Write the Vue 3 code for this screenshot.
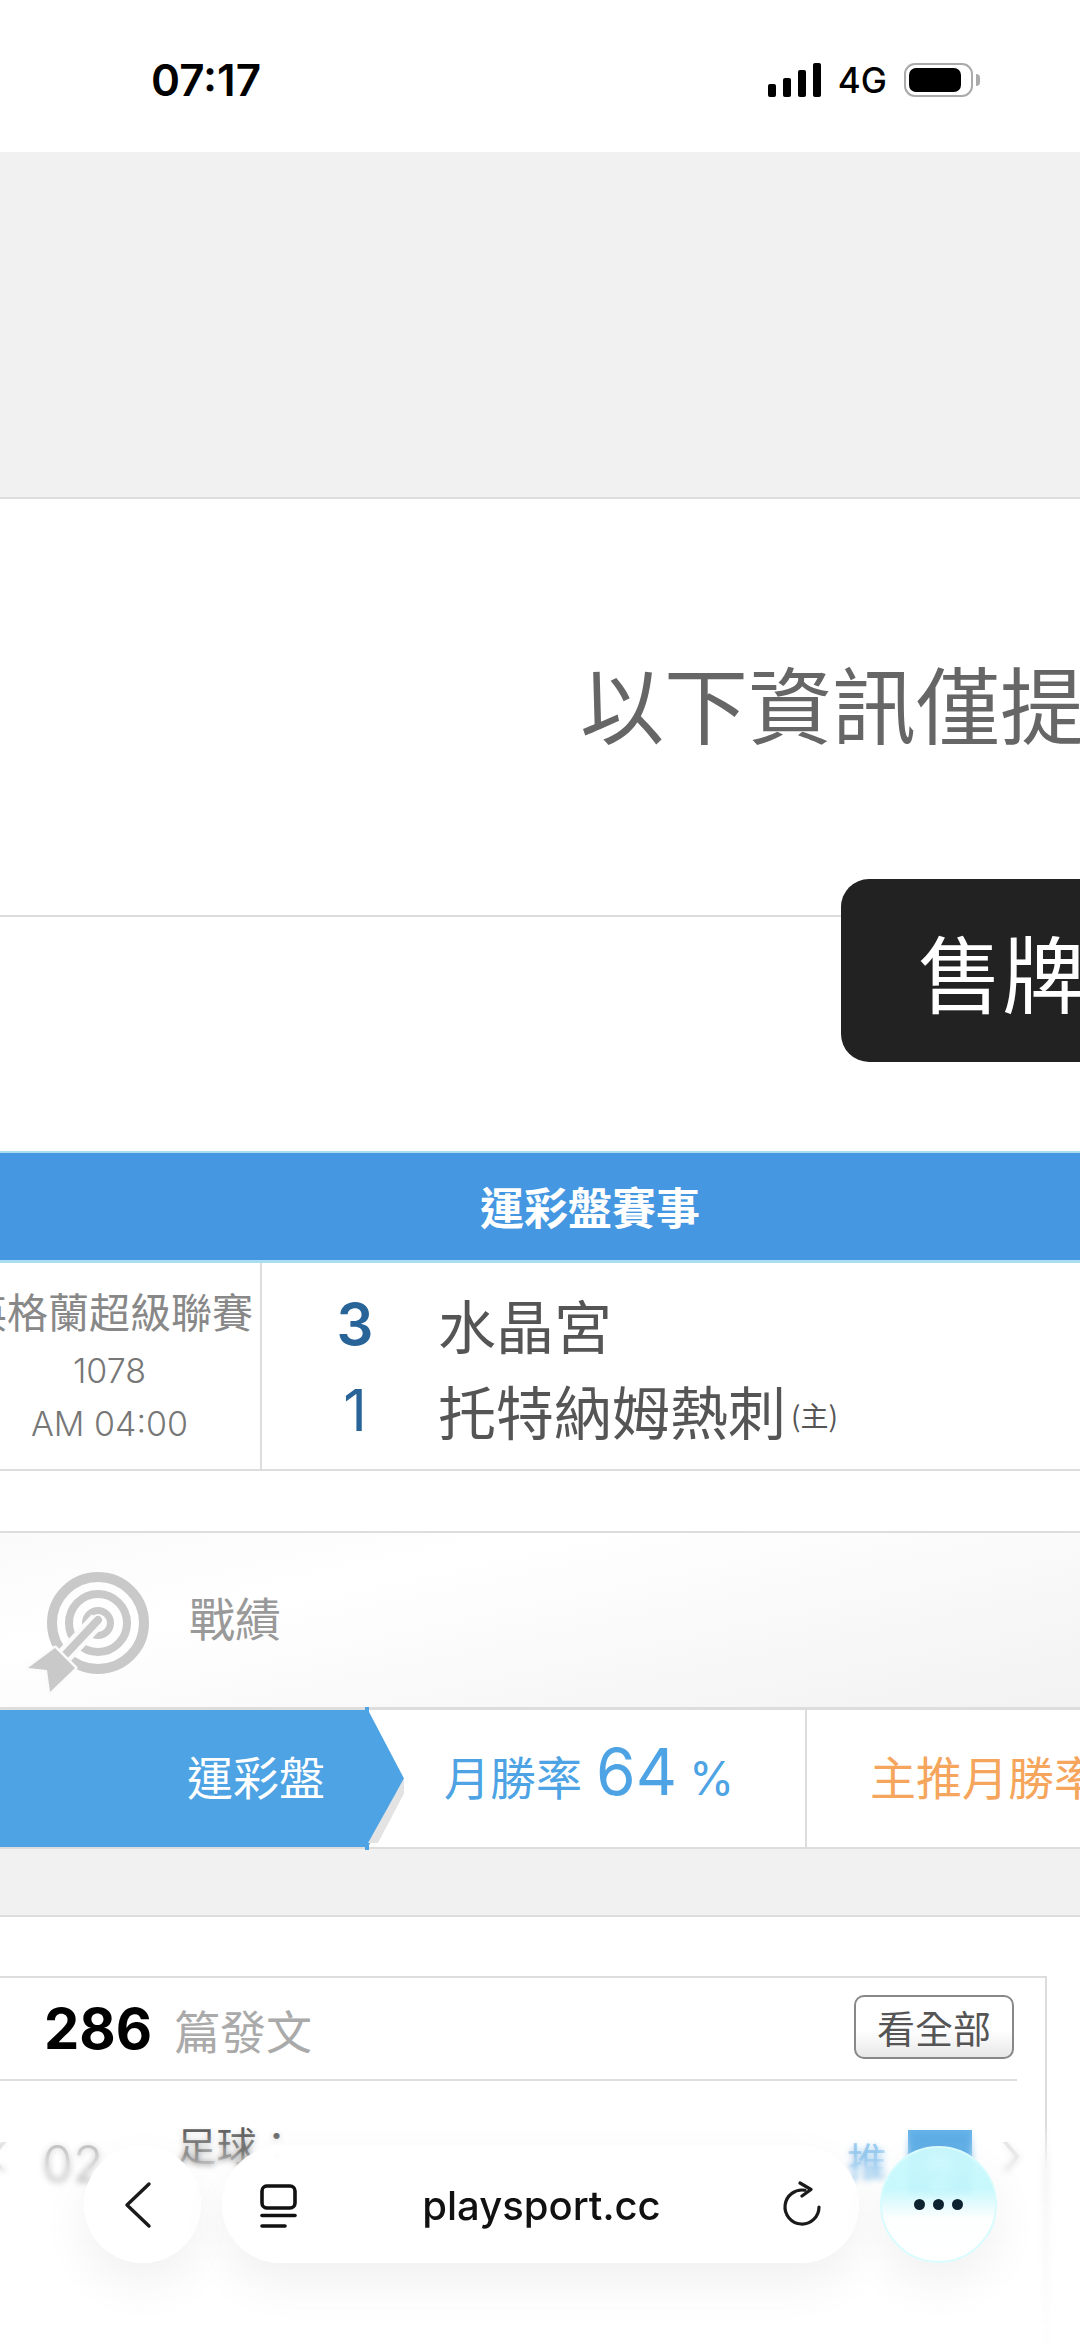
<script setup>
const signalBars = [13, 19, 27, 34]
const teams = [
  { score: 3, name: '水晶宮', strong: true },
  { score: 1, name: '托特納姆熱刺', home: true }
]
</script>

<template>
  <div class="page">
    <header class="status">
      <span class="time">07:17</span>
      <div class="status-right">
        <div class="signal">
          <i v-for="h in signalBars" :key="h" :style="{ height: h + 'px' }"></i>
        </div>
        <span class="net">4G</span>
        <div class="battery"><i></i></div>
        <div class="battery-cap"></div>
      </div>
    </header>

    <div class="gray-top"></div>

    <section class="notice">以下資訊僅提供參考</section>

    <section class="sale">
      <div class="sale-btn">售牌</div>
    </section>

    <div class="match-title">運彩盤賽事</div>
    <div class="match">
      <div class="league">
        <div class="league-name">英格蘭超級聯賽</div>
        <div class="league-meta">1078</div>
        <div class="league-meta">AM 04:00</div>
      </div>
      <div class="teams">
        <div v-for="t in teams" :key="t.name" class="team">
          <span class="score" :class="{ strong: t.strong }">{{ t.score }}</span>
          <span class="team-name">{{ t.name }}</span>
          <span v-if="t.home" class="home">(主)</span>
        </div>
      </div>
    </div>

    <div class="gap-white"></div>

    <section class="record-head">
      <svg class="target" width="135" height="130" viewBox="0 0 135 130">
        <g fill="none" stroke="#c9c9c9">
          <circle cx="78" cy="53" r="46" stroke-width="10" />
          <circle cx="78" cy="53" r="29" stroke-width="8" />
          <circle cx="78" cy="53" r="12.5" stroke-width="7" />
        </g>
        <path d="M78 50L45 85" stroke="#fbfbfb" stroke-width="17" fill="none" />
        <path d="M78 50L45 85" stroke="#c9c9c9" stroke-width="8" stroke-linecap="round" fill="none" />
        <path d="M35 78L8 98L27 100L30 122L55 98Z" fill="#c9c9c9" stroke="#fbfbfb" stroke-width="5" stroke-linejoin="round" paint-order="stroke" />
      </svg>
      <span class="record-title">戰績</span>
    </section>

    <section class="tabs">
      <div class="tab-active">
        <i class="tab-nub"></i>
        <span>運彩盤</span>
      </div>
      <div class="tab-rate">
        <span>月勝率</span><b>64</b><em>%</em>
      </div>
      <div class="tab-main">主推月勝率</div>
    </section>

    <div class="gray-gap"></div>

    <div class="panel-wrap">
      <section class="panel">
        <div class="panel-head">
          <b class="count">286</b>
          <span class="count-label">篇發文</span>
          <button class="see-all">看全部</button>
        </div>
        <div class="post">
          <span class="post-prev">‹</span>
          <span class="post-date">02</span>
          <span class="post-title">足球：</span>
          <span class="post-tag">推</span>
          <span class="post-badge">2</span>
          <span class="post-next">›</span>
        </div>
      </section>
    </div>

    <!-- browser toolbar floats over the page -->
    <div class="frost"></div>
    <nav class="toolbar">
      <div class="round-btn back">
        <svg width="30" height="48" viewBox="0 0 30 48" fill="none" stroke="#1a1a1a" stroke-width="3.4" stroke-linecap="round" stroke-linejoin="round">
          <path d="M26 3L4 24L26 45" />
        </svg>
      </div>
      <div class="url-pill">
        <svg width="40" height="46" viewBox="0 0 40 46" fill="none" stroke="#111" stroke-width="3.6" stroke-linecap="round" stroke-linejoin="round">
          <rect x="4" y="4" width="33" height="22" rx="5" />
          <path d="M4 33.5H37" />
          <path d="M4 44H27" />
        </svg>
        <span class="url">playsport.cc</span>
        <svg width="42" height="48" viewBox="0 0 42 48" fill="none" stroke="#1a1a1a" stroke-width="3.2" stroke-linecap="round" stroke-linejoin="round">
          <path d="M38 26A17 17 0 1 1 24 9.3" />
          <path d="M19 2L30 8.5L21 15" />
        </svg>
      </div>
      <div class="round-btn bubble">
        <i></i><i></i><i></i>
      </div>
    </nav>
  </div>
</template>

<style>
html, body {
  margin: 0;
  background: #fff;
}
</style>

<style scoped>
.page {
  position: relative;
  width: 1080px;
  height: 2347px;
  overflow: hidden;
  background: #fff;
  font-family: "Noto Sans CJK TC", "Noto Sans", sans-serif;
}

.status {
  height: 152px;
  box-sizing: border-box;
  padding: 8px 100px 0 151px;
  display: flex;
  justify-content: space-between;
  align-items: center;
  background: #fff;
}
.time {
  font: 600 44px/1 Inter, sans-serif;
  color: #000;
}
.status-right {
  display: flex;
  align-items: center;
}
.signal {
  display: flex;
  align-items: flex-end;
  gap: 7px;
  height: 34px;
}
.signal i {
  width: 8px;
  background: #000;
  border-radius: 2px;
}
.net {
  margin-left: 17px;
  font: 500 35px/1 Inter, sans-serif;
  color: #000;
}
.battery {
  margin-left: 17px;
  width: 69px;
  height: 34px;
  box-sizing: border-box;
  border: 2.5px solid #aaa;
  border-radius: 11px;
  padding: 2.5px;
}
.battery i {
  display: block;
  width: 52px;
  height: 24px;
  background: #000;
  border-radius: 7px;
}
.battery-cap {
  margin-left: 3px;
  width: 4px;
  height: 12px;
  background: #aaa;
  border-radius: 0 4px 4px 0;
}

.gray-top {
  height: 345px;
  background: #f1f1f1;
  border-bottom: 2px solid #ddd;
}

.notice {
  height: 418px;
  box-sizing: border-box;
  padding: 141px 0 0 580px;
  border-bottom: 2px solid #ddd;
  font-size: 84px;
  line-height: 124px;
  color: #666;
  white-space: nowrap;
}

.sale {
  height: 272px;
  margin-top: -38px;
  padding-left: 841px;
  box-sizing: border-box;
}
.sale-btn {
  width: 300px;
  height: 183px;
  box-sizing: border-box;
  padding-left: 77px;
  background: #222;
  border-radius: 28px;
  color: #fff;
  font-size: 84px;
  line-height: 183px;
  white-space: nowrap;
}

.match-title {
  height: 107px;
  padding-left: 480px;
  background: #4497e0;
  border-top: 2px solid #a9def0;
  border-bottom: 3px solid #a9def0;
  color: #fff;
  font-size: 44px;
  font-weight: 700;
  line-height: 107px;
}

.match {
  display: flex;
  height: 206px;
  border-bottom: 2px solid #ddd;
}
.league {
  flex: none;
  width: 297px;
  margin-left: -35px;
  box-sizing: border-box;
  padding: 14px 6px 0 0;
  border-right: 2px solid #ddd;
  text-align: center;
  color: #888;
  white-space: nowrap;
}
.league-name {
  font-size: 41px;
  line-height: 67px;
}
.league-meta {
  font: 300 34px/53px Inter, sans-serif;
  color: #777;
}
.teams {
  padding-top: 18px;
}
.team {
  display: flex;
  align-items: center;
  height: 86px;
  color: #555;
}
.score {
  width: 176px;
  box-sizing: border-box;
  padding-left: 10px;
  text-align: center;
  font: 400 58px/1 Inter, sans-serif;
  color: #286497;
}
.score.strong {
  font-weight: 600;
}
.team-name {
  font-size: 58px;
  white-space: nowrap;
}
.home {
  margin: 10px 0 0 5px;
  font-size: 28px;
}

.gap-white {
  height: 60px;
  border-bottom: 2px solid #ddd;
}

.record-head {
  display: flex;
  height: 174px;
  box-sizing: border-box;
  padding: 37px 0 0 20px;
  background: linear-gradient(168deg, #fafafa 0%, #fff 30%, #f2f2f2 100%);
}
.target {
  flex: none;
  filter: blur(0.7px);
}
.record-title {
  margin: 12px 0 0 34px;
  font-size: 46px;
  line-height: 68px;
  color: #999;
}

.tabs {
  display: flex;
  height: 137px;
  border-top: 3px solid #ddd;
  border-bottom: 2px solid #ddd;
  background: #fff;
  white-space: nowrap;
}
.tab-active {
  position: relative;
  flex: none;
  width: 404px;
  box-sizing: border-box;
  padding-left: 187px;
  color: #fff;
  font-size: 46px;
  line-height: 130px;
}
.tab-active span {
  position: relative;
  z-index: 1;
}
.tab-active::before {
  content: "";
  position: absolute;
  inset: 0;
  background: #4da3e3;
  clip-path: polygon(0 0, 368px 0, 404px 50%, 368px 100%, 0 100%);
}
/* grey edge under the arrow */
.tab-active::after {
  content: "";
  position: absolute;
  inset: 0;
  background: #e3e3e3;
  clip-path: polygon(404px 50%, 409px 54%, 378px 133px, 368px 133px);
}
.tab-nub {
  position: absolute;
  left: 365px;
  top: -3px;
  bottom: -3px;
  width: 4px;
  background: #4da3e3;
}
.tab-rate {
  flex: none;
  display: flex;
  align-items: baseline;
  width: 403px;
  box-sizing: border-box;
  padding-left: 40px;
  border-right: 2px solid #ddd;
  color: #4da3e3;
  font-size: 46px;
  line-height: 130px;
}
.tab-rate b {
  margin-left: 14px;
  font: 400 64px/1 Inter, sans-serif;
}
.tab-rate em {
  margin-left: 12px;
  font: 400 46px/1 Inter, sans-serif;
}
.tab-main {
  flex: none;
  padding-left: 63px;
  color: #f5a55c;
  font-size: 46px;
  line-height: 130px;
}

.gray-gap {
  height: 66px;
  background: #f1f1f1;
  border-bottom: 2px solid #ddd;
}

.panel-wrap {
  padding-top: 59px;
}
.panel {
  width: 1047px;
  height: 372px;
  box-sizing: border-box;
  border-top: 2px solid #ddd;
  border-right: 2px solid #ddd;
}
.panel-head {
  display: flex;
  align-items: center;
  width: 1017px;
  height: 103px;
  box-sizing: border-box;
  padding: 0 3px 0 44px;
  border-bottom: 2px solid #ddd;
}
.count {
  font: 700 56px/1 Inter, sans-serif;
  color: #000;
}
.count-label {
  margin-left: 22px;
  font-size: 46px;
  color: #aaa;
}
.see-all {
  margin: 0 0 4px auto;
  width: 160px;
  height: 64px;
  padding: 0;
  border: 2px solid #888;
  border-radius: 10px;
  background: linear-gradient(#fff 55%, #e8e8e8);
  color: #555;
  font-family: inherit;
  font-size: 38px;
  line-height: 1;
}
.post {
  position: relative;
  display: flex;
  align-items: flex-start;
  padding: 49px 0 0 42px;
  white-space: nowrap;
}
.post-prev {
  position: absolute;
  left: -14px;
  top: 40px;
  font: 300 64px/1 Inter, sans-serif;
  color: #ddd;
}
.post-date {
  font: 300 50px/1 Inter, sans-serif;
  color: #aaa;
  margin-top: 9px;
}
.post-title {
  margin-left: 73px;
  font-size: 40px;
  line-height: 44px;
  color: #555;
  margin-top: -8px;
}
.post-tag {
  margin-left: auto;
  margin-top: 8px;
  font-size: 40px;
  line-height: 44px;
  color: #6db4e8;
}
.post-badge {
  margin: 0 73px 0 21px;
  width: 64px;
  height: 66px;
  background: #5eaee6;
  color: #fff;
  font: 700 40px/90px Inter, sans-serif;
  text-align: center;
}
.post-next {
  position: absolute;
  right: 22px;
  top: 40px;
  font: 300 64px/1 Inter, sans-serif;
  color: #ddd;
}

.frost {
  position: absolute;
  left: 0;
  right: 0;
  top: 2125px;
  bottom: 0;
  backdrop-filter: blur(3px);
  background: linear-gradient(rgba(255, 255, 255, 0), rgba(255, 255, 255, 0.15) 25%, rgba(255, 255, 255, 0.85));
  -webkit-mask-image: linear-gradient(transparent, #000 45px);
  mask-image: linear-gradient(transparent, #000 45px);
}
.toolbar {
  position: absolute;
  left: 84px;
  top: 2146px;
  display: flex;
  gap: 21px;
}
.round-btn,
.url-pill {
  height: 117px;
  border-radius: 59px;
  background: rgba(255, 255, 255, 0.97);
  box-shadow: 0 20px 50px rgba(0, 0, 0, 0.06);
  display: flex;
  align-items: center;
}
.round-btn {
  width: 117px;
  justify-content: center;
}
.round-btn.back svg {
  margin-right: 9px;
}
.url-pill {
  width: 637px;
  box-sizing: border-box;
  padding: 0 36px 0 36px;
  justify-content: space-between;
}
.url {
  margin: 2px 0 0 4px;
  font: 500 40px/1 Inter, sans-serif;
  color: #111;
}
.bubble {
  gap: 8px;
  box-sizing: border-box;
  border: 2px solid #d8fbfd;
  background: radial-gradient(ellipse 80px 40px at 50% 8%, rgba(220, 251, 253, 0.5), transparent),
    linear-gradient(rgba(190, 247, 251, 0.93) 0%, rgba(195, 248, 252, 0.93) 36%, #fdfefe 62%, #fff 100%);
}
.bubble i {
  width: 11px;
  height: 11px;
  border-radius: 50%;
  background: #0d2430;
}
</style>
